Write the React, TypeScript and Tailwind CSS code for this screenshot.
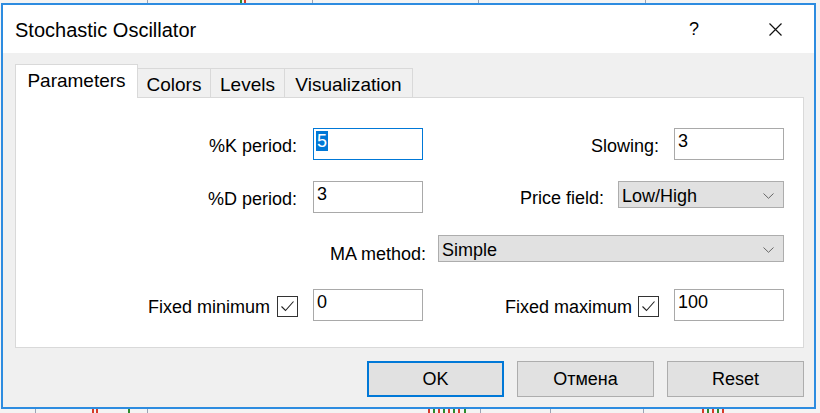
import { ReactNode } from "react";

const font = "font-['Liberation_Sans',Arial,sans-serif]";

type Candle = { x: number; w: number; color: string };

const topMarks: Candle[] = [
  { x: 147, w: 1, color: "#9aa3b5" },
  { x: 240, w: 2, color: "#2e8b2e" },
  { x: 244, w: 2, color: "#d63b2a" },
  { x: 312, w: 1, color: "#9aa3b5" },
  { x: 478, w: 1, color: "#9aa3b5" },
  { x: 645, w: 1, color: "#9aa3b5" },
];

const bottomMarks: Candle[] = [
  { x: 35, w: 1, color: "#9aa3b5" },
  { x: 92, w: 2, color: "#d63b2a" },
  { x: 96, w: 2, color: "#d63b2a" },
  { x: 128, w: 2, color: "#2e8b2e" },
  { x: 147, w: 1, color: "#9aa3b5" },
  { x: 428, w: 2, color: "#d63b2a" },
  { x: 433, w: 2, color: "#2e8b2e" },
  { x: 438, w: 2, color: "#d63b2a" },
  { x: 443, w: 2, color: "#2e8b2e" },
  { x: 448, w: 2, color: "#d63b2a" },
  { x: 453, w: 2, color: "#2e8b2e" },
  { x: 458, w: 2, color: "#d63b2a" },
  { x: 464, w: 2, color: "#2e8b2e" },
  { x: 480, w: 1, color: "#9aa3b5" },
  { x: 550, w: 1, color: "#9aa3b5" },
  { x: 643, w: 1, color: "#9aa3b5" },
  { x: 702, w: 2, color: "#d63b2a" },
  { x: 707, w: 2, color: "#2e8b2e" },
  { x: 712, w: 2, color: "#d63b2a" },
  { x: 717, w: 2, color: "#2e8b2e" },
  { x: 722, w: 2, color: "#d63b2a" },
];

function TextBox({ value, focused, selected }: { value: string; focused?: boolean; selected?: boolean }) {
  return (
    <div
      className={`w-[110px] h-[32px] bg-white border pl-[2px] pt-[2px] text-[18px] leading-[21px] text-black ${
        focused ? "border-[#0078d7]" : "border-[#a9a9a9]"
      }`}
    >
      {selected ? <span className="bg-[#0078d7] text-white px-px">{value}</span> : <span className="px-px">{value}</span>}
    </div>
  );
}

function Chevron() {
  return (
    <svg width="11" height="6" viewBox="0 0 11 6" className="shrink-0">
      <path d="M0.5 0.5 L5.5 5.3 L10.5 0.5" fill="none" stroke="#666" strokeWidth="1" />
    </svg>
  );
}

function Select({ value, width }: { value: string; width: string }) {
  return (
    <div
      className={`${width} h-[27px] bg-[#e1e1e1] border border-[#adadad] flex items-center justify-between pl-[3px] pr-[9px] pt-[2px] text-[18px] leading-[20px] text-black`}
    >
      <span>{value}</span>
      <Chevron />
    </div>
  );
}

function CheckBox() {
  return (
    <div className="w-[21px] h-[21px] border border-[#333] bg-white flex items-center justify-center">
      <svg width="15" height="13" viewBox="0 0 15 13">
        <path d="M1.5 6.5 L5.5 10.5 L13.5 1.5" fill="none" stroke="#222" strokeWidth="1.1" />
      </svg>
    </div>
  );
}

function Label({ children, className = "" }: { children: ReactNode; className?: string }) {
  return <span className={`text-[18px] leading-[20px] text-black whitespace-nowrap ${className}`}>{children}</span>;
}

function Button({ children, primary }: { children: ReactNode; primary?: boolean }) {
  return (
    <div
      className={`w-[137px] h-[36px] bg-[#e1e1e1] flex items-center justify-center text-[18px] text-black ${
        primary ? "border-2 border-[#0078d7]" : "border border-[#adadad]"
      }`}
    >
      {children}
    </div>
  );
}

export default function App() {
  return (
    <div className={`relative w-[820px] h-[413px] bg-[#f4f4f4] overflow-hidden pt-[3px] pl-[1px] ${font}`}>
      {/* chart behind the dialog */}
      {topMarks.map((m, i) => (
        <div key={"t" + i} className="absolute top-0 h-[3px]" style={{ left: m.x, width: m.w, background: m.color }} />
      ))}
      {bottomMarks.map((m, i) => (
        <div key={"b" + i} className="absolute bottom-0 h-[4px]" style={{ left: m.x, width: m.w, background: m.color }} />
      ))}

      <div className="relative w-[815px] h-[406px] border-2 border-[#2d8ce0] bg-[#f0f0f0] flex flex-col">
        {/* title bar */}
        <div className="h-[48px] bg-white flex items-center pl-[12px] shrink-0">
          <span className="text-[20px] text-black flex-1 pt-[1px]">Stochastic Oscillator</span>
          <span className="text-[18px] text-black mr-[70px]">?</span>
          <svg width="13" height="13" viewBox="0 0 13 13" className="mr-[32px]">
            <path d="M0.5 0.5 L12.5 12.5 M12.5 0.5 L0.5 12.5" stroke="#111" strokeWidth="1.2" />
          </svg>
        </div>

        {/* body */}
        <div className="flex flex-col pl-[12px] pr-[10px] pt-[11px]">
          <div className="flex items-end h-[33px] text-[19px] text-black">
            <div className="relative z-10 w-[123px] h-[34px] -mb-px bg-white border border-b-0 border-[#d9d9d9] flex items-center justify-center pb-px">
              Parameters
            </div>
            <div className="w-[73px] h-[29px] border-t border-r border-[#d9d9d9] flex items-center justify-center pt-[5px]">Colors</div>
            <div className="w-[74px] h-[29px] border-t border-r border-[#d9d9d9] flex items-center justify-center pt-[5px]">Levels</div>
            <div className="w-[128px] h-[29px] border-t border-r border-[#d9d9d9] flex items-center justify-center pt-[5px]">Visualization</div>
          </div>

          <div className="h-[251px] bg-white border border-[#d9d9d9] flex flex-col pt-[30px] pr-[19px]">
            <div className="flex items-start">
              <div className="w-[407px] flex items-center justify-end gap-[16px]">
                <Label className="pt-[3px]">%K period:</Label>
                <TextBox value="5" focused selected />
              </div>
              <div className="flex-1 flex items-center justify-end gap-[15px]">
                <Label className="pt-[3px]">Slowing:</Label>
                <TextBox value="3" />
              </div>
            </div>

            <div className="flex items-start mt-[21px]">
              <div className="w-[407px] flex items-center justify-end gap-[16px]">
                <Label className="pt-[3px]">%D period:</Label>
                <TextBox value="3" />
              </div>
              <div className="flex-1 flex items-center justify-end gap-[14px]">
                <Label className="translate-y-[3px]">Price field:</Label>
                <Select value="Low/High" width="w-[166px]" />
              </div>
            </div>

            <div className="flex items-center justify-end gap-[12px] mt-[22px]">
              <Label className="translate-y-[5px]">MA method:</Label>
              <Select value="Simple" width="w-[346px]" />
            </div>

            <div className="flex items-start mt-[27px]">
              <div className="w-[407px] flex items-center justify-end">
                <Label className="pt-[3px]">Fixed minimum</Label>
                <div className="ml-[7px] mr-[15px] pt-[3px]">
                  <CheckBox />
                </div>
                <TextBox value="0" />
              </div>
              <div className="flex-1 flex items-center justify-end">
                <Label className="pt-[3px]">Fixed maximum</Label>
                <div className="ml-[6px] mr-[15px] pt-[3px]">
                  <CheckBox />
                </div>
                <TextBox value="100" />
              </div>
            </div>
          </div>

          <div className="flex justify-end gap-[13px] mt-[13px]">
            <Button primary>OK</Button>
            <Button>Отмена</Button>
            <Button>Reset</Button>
          </div>
        </div>
      </div>
    </div>
  );
}
